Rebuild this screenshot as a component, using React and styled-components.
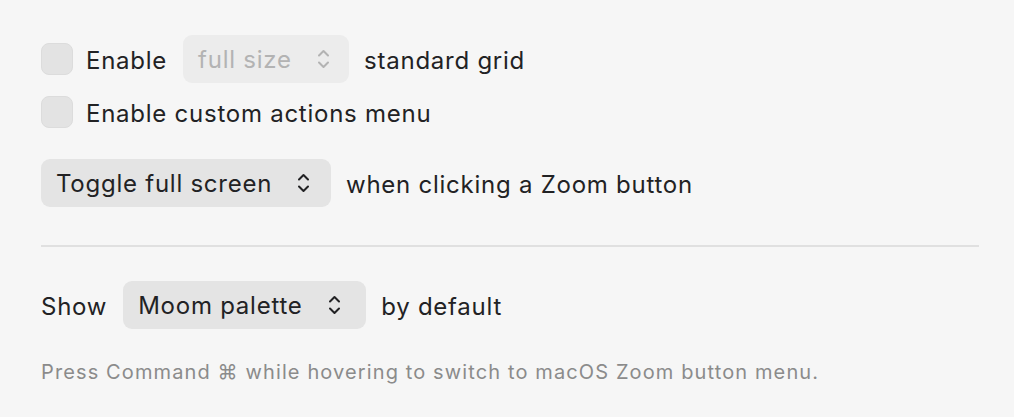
import styled, { createGlobalStyle } from "styled-components";

const GlobalStyle = createGlobalStyle`
  html, body {
    margin: 0;
    padding: 0;
    background: #f6f6f6;
  }
  body {
    font-family: Inter, "Noto Sans", "Liberation Sans", sans-serif;
    -webkit-font-smoothing: antialiased;
  }
`;

const Page = styled.div`
  width: 1014px;
  height: 417px;
  box-sizing: border-box;
  padding: 35px 35px 0 41px;
  display: flex;
  flex-direction: column;
  color: #222224;
  font-size: 24px;
`;

const Row = styled.div`
  display: flex;
  align-items: center;
  height: ${(p) => p.$h || 48}px;
  margin-top: ${(p) => p.$mt || 0}px;
`;

const Check = styled.span`
  width: 32px;
  height: 32px;
  box-sizing: border-box;
  border-radius: 8px;
  background: #e3e3e3;
  border: 1px solid #dcdcdc;
  margin-right: 13px;
  flex-shrink: 0;
`;

const Label = styled.span`
  margin-right: ${(p) => p.$mr || 0}px;
  white-space: nowrap;
  letter-spacing: 0.75px;
  padding-top: 3px;
`;

const Popup = styled.div`
  height: 48px;
  width: ${(p) => p.$w}px;
  box-sizing: border-box;
  border-radius: 9px;
  background: ${(p) => (p.$disabled ? "#ececec" : "#e4e4e4")};
  color: ${(p) => (p.$disabled ? "#b3b3b3" : "#222224")};
  display: flex;
  align-items: center;
  gap: 26px;
  padding: 0 0 0 15px;
  margin-right: 15px;
  flex-shrink: 0;
  white-space: nowrap;
  letter-spacing: 0.75px;
`;

const Divider = styled.hr`
  border: none;
  height: 2px;
  background: #e0e0e0;
  margin: 38px 0 0 0;
  width: 938px;
`;

const Note = styled.p`
  margin: 31px 0 0 0;
  font-size: 20px;
  color: #8b8b8b;
  white-space: nowrap;
  letter-spacing: 1.12px;
`;

function Chevrons({ color }) {
  return (
    <svg width="11" height="20" viewBox="0 0 11 20" fill="none">
      <path
        d="M1 6.5 L5.5 2 L10 6.5 M1 13.5 L5.5 18 L10 13.5"
        stroke={color}
        strokeWidth="2"
        strokeLinecap="round"
        strokeLinejoin="round"
      />
    </svg>
  );
}

export default function App() {
  return (
    <>
      <GlobalStyle />
      <Page>
        <Row>
          <Check />
          <Label $mr={16}>Enable</Label>
          <Popup $w={166} $disabled>
            full size
            <Chevrons color="#b3b3b3" />
          </Popup>
          <Label>standard grid</Label>
        </Row>
        <Row $h={32} $mt={13}>
          <Check />
          <Label>Enable custom actions menu</Label>
        </Row>
        <Row $mt={31}>
          <Popup $w={290}>
            Toggle full screen
            <Chevrons color="#222224" />
          </Popup>
          <Label>when clicking a Zoom button</Label>
        </Row>
        <Divider />
        <Row $mt={34}>
          <Label $mr={16}>Show</Label>
          <Popup $w={243}>
            Moom palette
            <Chevrons color="#222224" />
          </Popup>
          <Label>by default</Label>
        </Row>
        <Note>Press Command ⌘ while hovering to switch to macOS Zoom button menu.</Note>
      </Page>
    </>
  );
}
